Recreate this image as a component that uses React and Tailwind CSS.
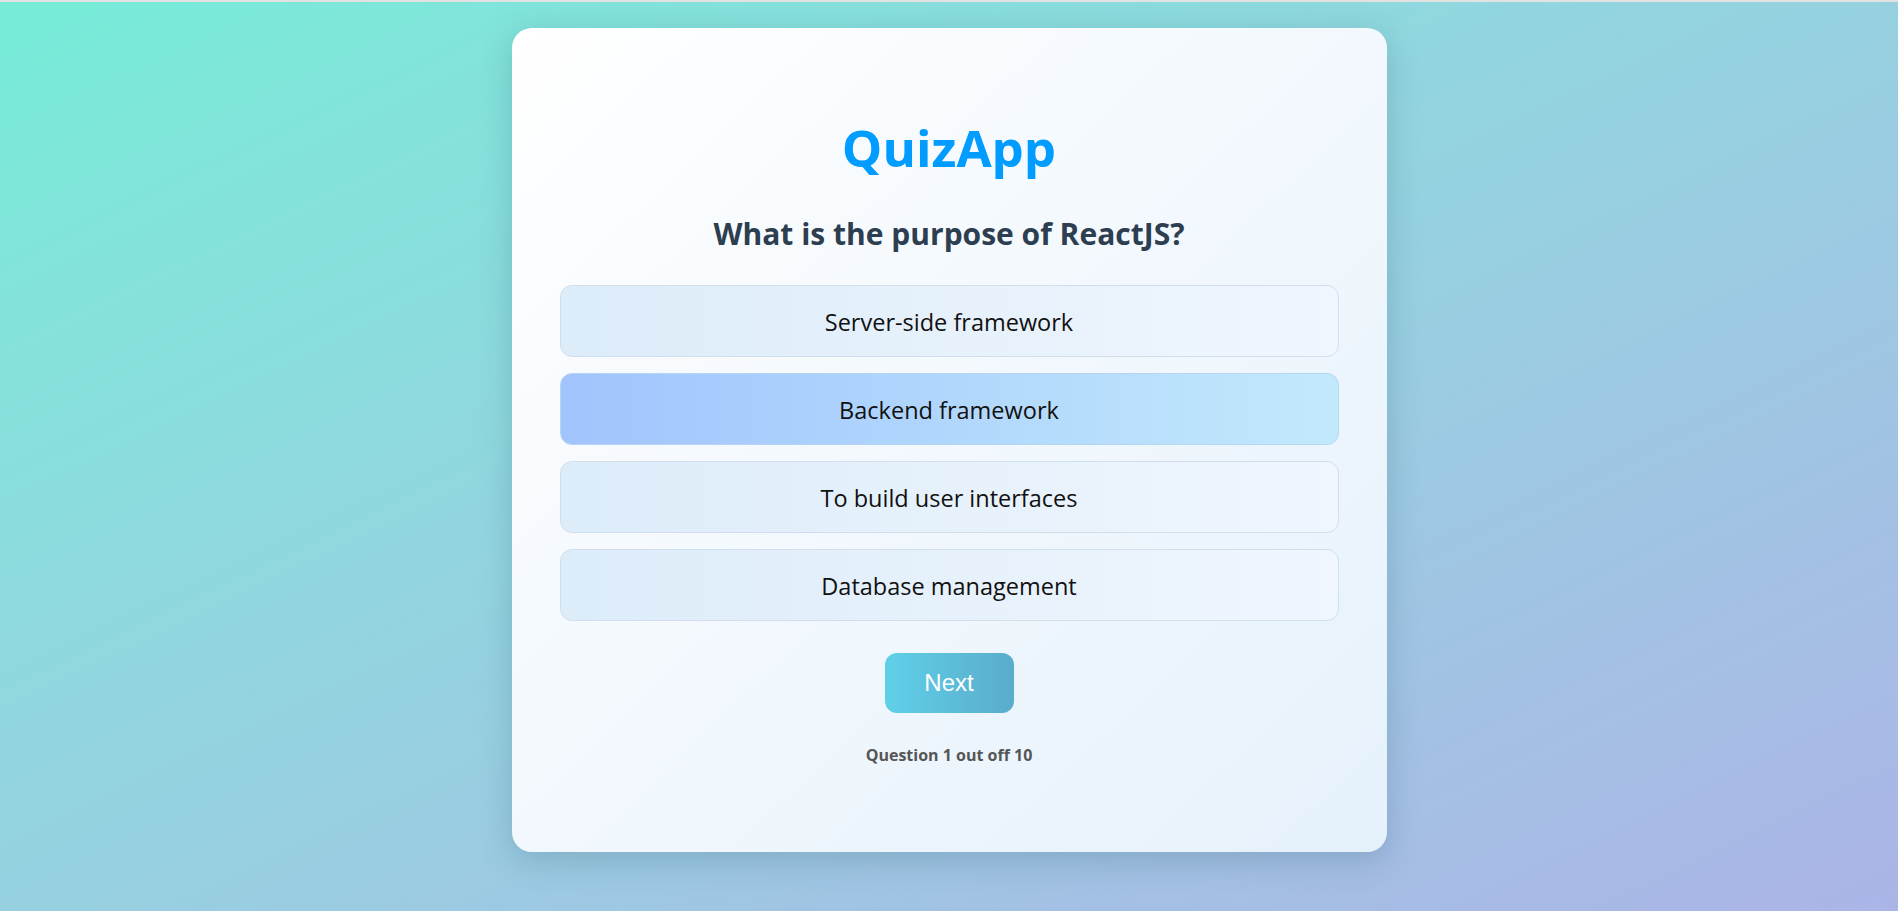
import React, { useState } from 'react';

const options = [
  'Server-side framework',
  'Backend framework',
  'To build user interfaces',
  'Database management',
];

function App() {
  const [selected, setSelected] = useState(1);

  return (
    <div className="min-h-screen flex flex-col bg-gradient-to-br from-[#76ecd8] to-[#abb4e7]">
      <div className="h-[2px] bg-[#e2e2e2]" />
      <div className="pt-[26px] pb-[59px]">
        <div className="mx-auto w-[875px] h-[824px] rounded-[20px] bg-gradient-to-br from-white to-[#e5f1fb] shadow-[0_8px_32px_rgba(40,90,110,0.25)] px-12 pt-[90px] flex flex-col items-center">
          {/* Title */}
          <h1 className="text-[51px] leading-[58px] font-bold text-[#009cff] font-['Open_Sans',sans-serif]">
            QuizApp
          </h1>

          {/* Question */}
          <h2 className="mt-[40px] text-[30px] leading-[36px] font-bold text-[#2c3e50] font-['Open_Sans',sans-serif]">
            What is the purpose of ReactJS?
          </h2>

          {/* Options */}
          <ul className="mt-[33px] w-full flex flex-col gap-4">
            {options.map((opt, i) => (
              <li key={opt}>
                <button
                  onClick={() => setSelected(i)}
                  className={
                    i === selected
                      ? 'w-full h-[72px] pt-[3px] rounded-xl border border-[#b4d6f4] bg-gradient-to-r from-[#a1c4fd] to-[#c2e9fb] text-[23.5px] text-[#111] font-["Open_Sans",sans-serif]'
                      : 'w-full h-[72px] pt-[3px] rounded-xl border border-[#d0dfeb] bg-gradient-to-r from-[#dcecf9] to-[#f0f6fd] text-[23.5px] text-[#111] font-["Open_Sans",sans-serif]'
                  }
                >
                  {opt}
                </button>
              </li>
            ))}
          </ul>

          {/* Next */}
          <button className="mt-[32px] w-[129px] h-[60px] rounded-xl bg-gradient-to-r from-[#5fd0e8] to-[#5aaccc] text-white text-[24px] font-['Liberation_Sans',Arial,sans-serif]">
            Next
          </button>

          <p className="mt-[32px] text-[16px] leading-[20px] font-bold text-[#555] font-['Open_Sans',sans-serif]">
            Question 1 out off 10
          </p>
        </div>
      </div>
    </div>
  );
}

export default App;
